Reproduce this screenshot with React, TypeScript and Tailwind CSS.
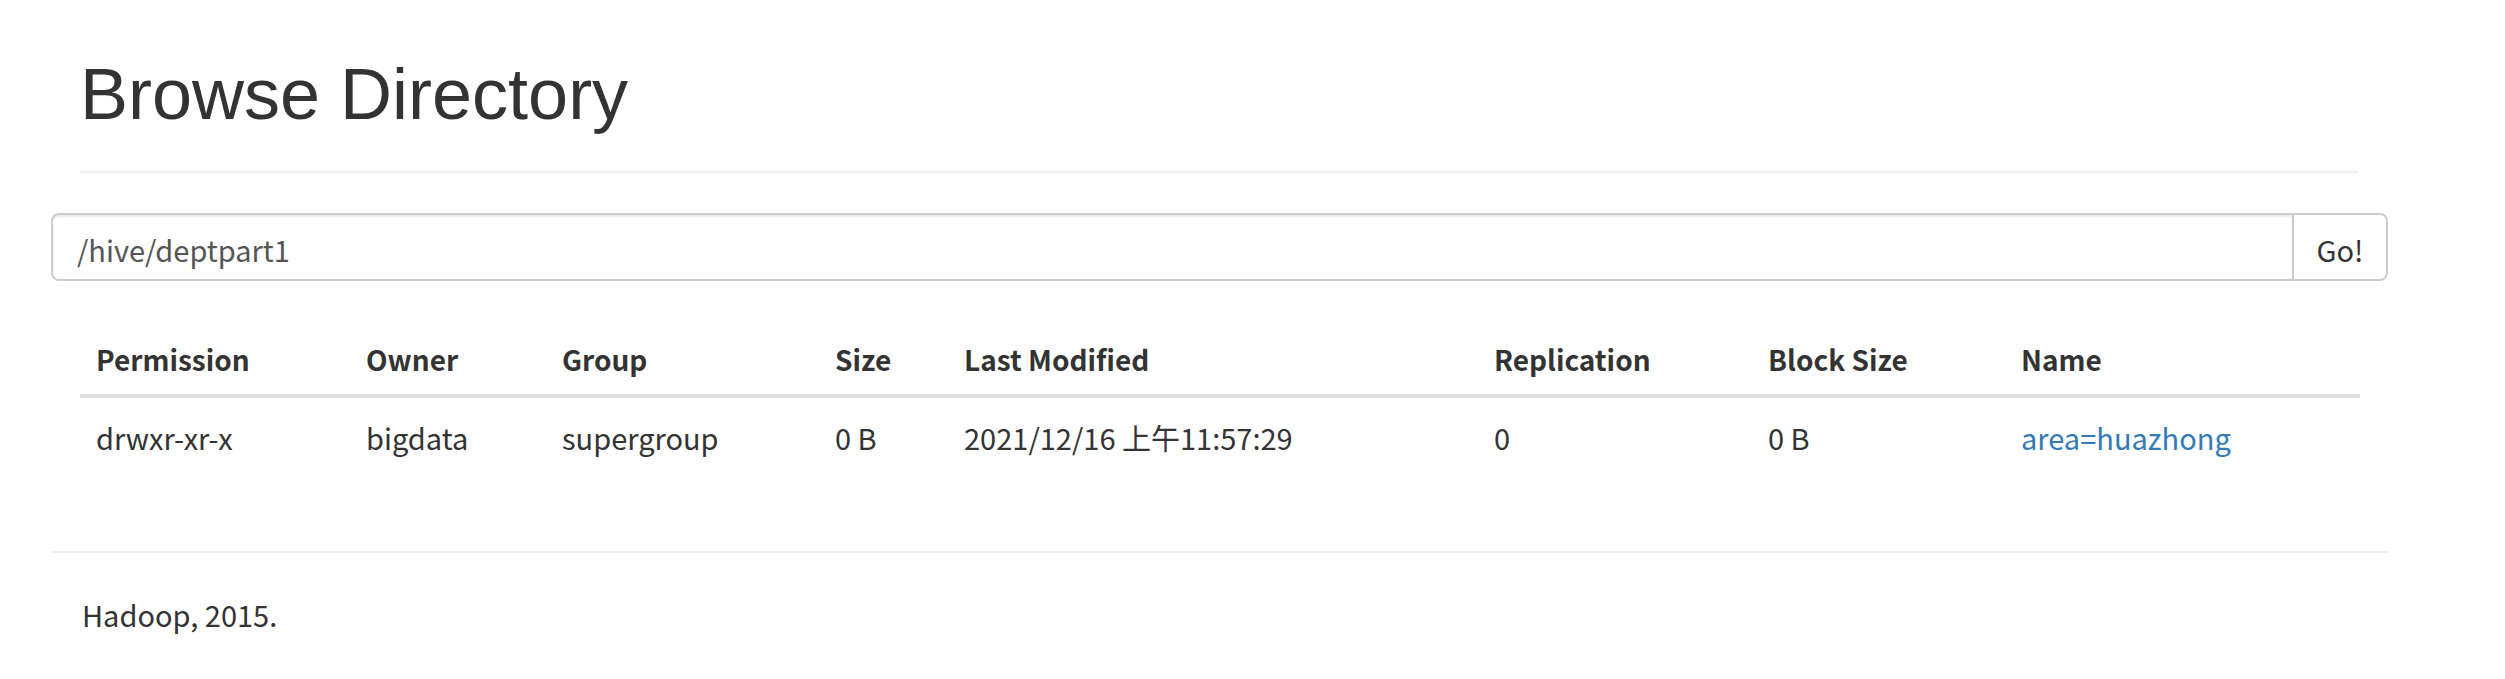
const columns = [
  { label: "Permission", width: "w-[270px]" },
  { label: "Owner", width: "w-[196px]" },
  { label: "Group", width: "w-[273px]" },
  { label: "Size", width: "w-[129px]" },
  { label: "Last Modified", width: "w-[530px]" },
  { label: "Replication", width: "w-[274px]" },
  { label: "Block Size", width: "w-[253px]" },
  { label: "Name", width: "w-[355px]" },
]

const rows = [
  {
    permission: "drwxr-xr-x",
    owner: "bigdata",
    group: "supergroup",
    size: "0 B",
    modified: "2021/12/16 上午11:57:29",
    replication: "0",
    blockSize: "0 B",
    name: "area=huazhong",
  },
]

export default function App() {
  return (
    <div className="min-h-screen bg-white text-[#333] font-['Noto_Sans_CJK_SC','Noto_Sans',sans-serif] text-[29px] leading-[40px]">
      <div className="ml-[51px] w-[2337px]">
        {/* Page header */}
        <div className="px-[29px] pt-[55px]">
          <div className="border-b-2 border-[#eee] pb-[37px]">
            <h1 className="font-['Liberation_Sans',Arial,sans-serif] text-[72px] leading-[79px] font-normal text-[#333]">
              Browse Directory
            </h1>
          </div>
        </div>

        {/* Path input */}
        <div className="mt-[40px] flex h-[68px]">
          <div className="flex flex-1 items-center rounded-l-[8px] border-2 border-r-0 border-[#ccc] px-[24px] pt-[3px] text-[#555] shadow-[inset_0_2px_2px_rgba(0,0,0,0.075)]">
            /hive/deptpart1
          </div>
          <button className="w-[96px] rounded-r-[8px] border-2 border-[#ccc] bg-white pt-[3px] text-[#333]">
            Go!
          </button>
        </div>

        {/* Listing */}
        <div className="mt-[41px] px-[29px]">
          <table className="w-full table-fixed border-collapse">
            <thead>
              <tr>
                {columns.map((c) => (
                  <th
                    key={c.label}
                    className={`${c.width} border-b-4 border-[#ddd] px-[16px] pt-[17px] pb-[15px] text-left text-[28px] font-bold`}
                  >
                    {c.label}
                  </th>
                ))}
              </tr>
            </thead>
            <tbody>
              {rows.map((r) => (
                <tr key={r.name}>
                  <td className="px-[16px] pt-[19px] pb-[13px]">{r.permission}</td>
                  <td className="px-[16px] pt-[19px] pb-[13px]">{r.owner}</td>
                  <td className="px-[16px] pt-[19px] pb-[13px]">{r.group}</td>
                  <td className="px-[16px] pt-[19px] pb-[13px]">{r.size}</td>
                  <td className="px-[16px] pt-[19px] pb-[13px]">{r.modified}</td>
                  <td className="px-[16px] pt-[19px] pb-[13px]">{r.replication}</td>
                  <td className="px-[16px] pt-[19px] pb-[13px]">{r.blockSize}</td>
                  <td className="px-[16px] pt-[19px] pb-[13px]">
                    <a href="#" className="text-[#337ab7]">
                      {r.name}
                    </a>
                  </td>
                </tr>
              ))}
            </tbody>
          </table>
        </div>

        {/* Footer */}
        <div className="mt-[81px] border-t-2 border-[#eee] pt-[41px] pl-[31px]">
          <p>Hadoop, 2015.</p>
        </div>
      </div>
    </div>
  )
}
